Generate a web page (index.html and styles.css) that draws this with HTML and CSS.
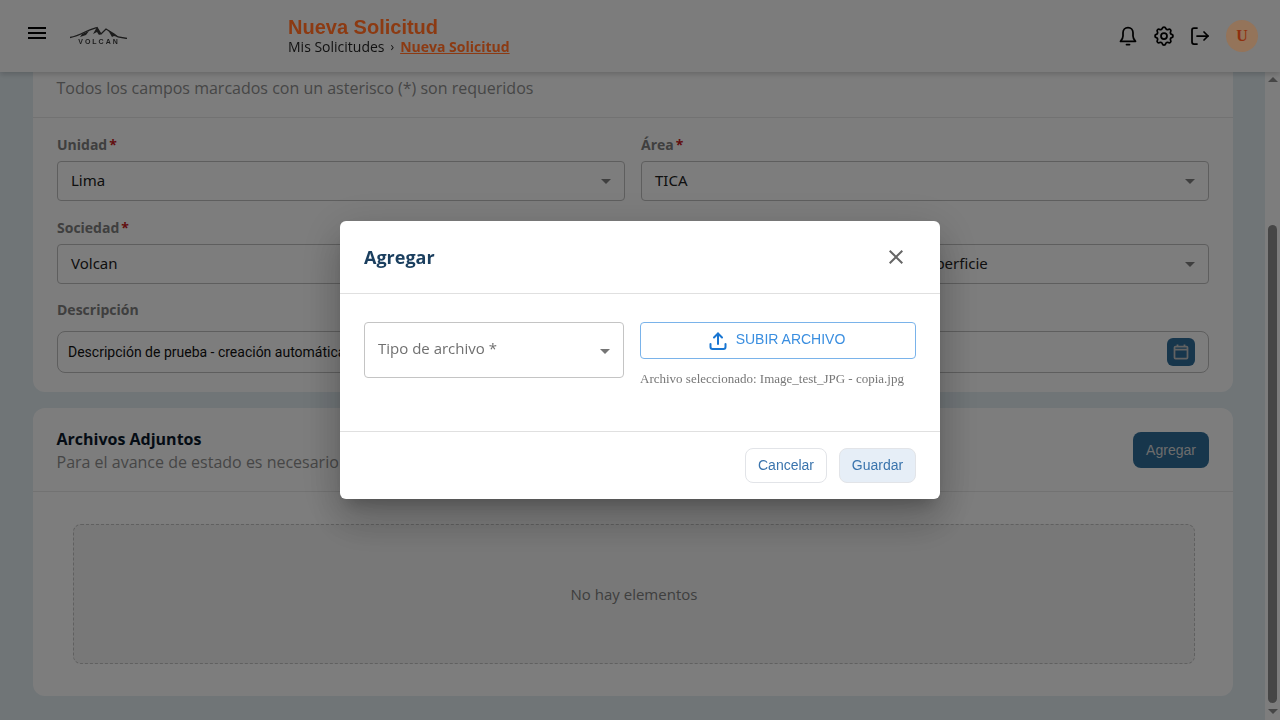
FILE: index.html
```html
<!DOCTYPE html>
<html>
<head>
<meta name="viewport" content="width=device-width, initial-scale=1">
<link rel="stylesheet" href="styles.css">
</head>
<body>

<header class="topbar">
  <svg class="menu-icon" width="24" height="24" viewBox="0 0 24 24"><path fill="currentColor" d="M3 18h18v-2H3zm0-5h18v-2H3zm0-7v2h18V6z"/></svg>
  <div class="logo">
    <svg width="58" height="13" viewBox="0 0 58 13" fill="none" stroke="#1c1c1c"><path stroke-width="1.300" d="M0 11.500C6 10.500 10 8.500 15 6S22 3 27 1.500L31 8l5-5 8 5 4 3 9 1.500"/><path fill="#1c1c1c" stroke="none" d="M27 1l-4 7 4-2 2 3 2-1zM38 4l4 7 2-1 4 1-4-3zM12 8l7-3-3 4-6 2z"/></svg>
    <span class="logo-text">VOLCAN</span>
  </div>
  <div class="page-title">
    <div class="page-title-main">Nueva Solicitud</div>
    <div class="crumbs"><span>Mis Solicitudes</span><span class="crumb-sep">›</span><a class="crumb-current">Nueva Solicitud</a></div>
  </div>
  <div class="topbar-actions">
    <svg class="action-icon" width="24" height="24" viewBox="0 0 24 24" fill="none" stroke="currentColor" stroke-width="1.750" stroke-linecap="round" stroke-linejoin="round"><path d="M12 3.500c-3 0-5 2.300-5 5.300v3.200c0 2.200-1 3.700-2.500 5.300h15c-1.500-1.600-2.500-3.100-2.500-5.300V8.800c0-3-2-5.300-5-5.300z"/><path d="M10.500 20.500h3"/></svg>
    <svg class="action-icon" width="24" height="24" viewBox="0 0 24 24" fill="none" stroke="currentColor" stroke-width="1.750" stroke-linecap="round" stroke-linejoin="round"><path d="M10.325 4.317c.426-1.756 2.924-1.756 3.350 0a1.724 1.724 0 0 0 2.573 1.066c1.543-.940 3.310.826 2.370 2.370a1.724 1.724 0 0 0 1.065 2.572c1.756.426 1.756 2.924 0 3.350a1.724 1.724 0 0 0-1.066 2.573c.940 1.543-.826 3.310-2.370 2.370a1.724 1.724 0 0 0-2.572 1.065c-.426 1.756-2.924 1.756-3.350 0a1.724 1.724 0 0 0-2.573-1.066c-1.543.940-3.310-.826-2.370-2.370a1.724 1.724 0 0 0-1.065-2.572c-1.756-.426-1.756-2.924 0-3.350a1.724 1.724 0 0 0 1.066-2.573c-.940-1.543.826-3.310 2.370-2.370 1 .608 2.296.070 2.572-1.065"/><circle cx="12" cy="12" r="3"/></svg>
    <svg class="action-icon" width="24" height="24" viewBox="0 0 24 24" fill="none" stroke="currentColor" stroke-width="1.750" stroke-linecap="round" stroke-linejoin="round"><path d="M9 4H6a2 2 0 0 0-2 2v12a2 2 0 0 0 2 2h3"/><path d="M9 12h11"/><path d="M16 8l4 4-4 4"/></svg>
    <div class="avatar">U</div>
  </div>
</header>

<div class="app">
  <main class="page">
    <section class="card card-form">
      <p class="card-note">Todos los campos marcados con un asterisco (*) son requeridos</p>
      <div class="form-grid">
        <div class="field">
          <label class="field-label">Unidad<span class="req">*</span></label>
          <div class="select-box"><span>Lima</span><i class="caret"></i></div>
        </div>
        <div class="field">
          <label class="field-label">Área<span class="req">*</span></label>
          <div class="select-box"><span>TICA</span><i class="caret"></i></div>
        </div>
        <div class="field">
          <label class="field-label">Sociedad<span class="req">*</span></label>
          <div class="select-box"><span>Volcan</span><i class="caret"></i></div>
        </div>
        <div class="field">
          <label class="field-label">Gerencia<span class="req">*</span></label>
          <div class="select-box"><span>Gerencia de Operaciones de Mina de Superficie</span><i class="caret"></i></div>
        </div>
        <div class="field field-text">
          <label class="field-label">Descripción</label>
          <div class="text-box">Descripción de prueba - creación automática</div>
        </div>
        <div class="field field-text">
          <label class="field-label">Fecha</label>
          <div class="text-box date-box">
            <span class="date-btn">
              <svg width="16" height="16" viewBox="0 0 16 16" fill="none" stroke="currentColor" stroke-width="1.750"><rect x="1.500" y="2.500" width="13" height="12" rx="1"/><path d="M1.500 5.500h13M4.500 .5v2M11.500 .5v2"/></svg>
            </span>
          </div>
        </div>
      </div>
    </section>

    <section class="card card-files">
      <div class="files-head">
        <div>
          <h3 class="files-title">Archivos Adjuntos</h3>
          <p class="files-sub">Para el avance de estado es necesario adjuntar al menos un archivo</p>
        </div>
        <button class="btn-primary">Agregar</button>
      </div>
      <div class="files-body">
        <div class="empty-box">No hay elementos</div>
      </div>
    </section>
  </main>

  <div class="scrollbar">
    <i class="arrow-up"></i>
    <div class="thumb"></div>
    <i class="arrow-down"></i>
  </div>
</div>

<div class="overlay">
  <div class="modal">
    <div class="modal-head">
      <h2 class="modal-title">Agregar</h2>
      <svg class="modal-close" width="24" height="24" viewBox="0 0 24 24"><path fill="currentColor" d="M19 6.410 17.590 5 12 10.590 6.410 5 5 6.410 10.590 12 5 17.590 6.410 19 12 13.410 17.590 19 19 17.590 13.410 12z"/></svg>
    </div>
    <div class="modal-body">
      <div class="type-select"><span>Tipo de archivo *</span><i class="caret caret-light"></i></div>
      <div class="upload-col">
        <button class="btn-upload">
          <svg width="20" height="20" viewBox="0 0 20 20" fill="none" stroke="#1976d2" stroke-width="2" stroke-linecap="round" stroke-linejoin="round"><path d="M2.500 13v3a2 2 0 0 0 2 2h11a2 2 0 0 0 2-2v-3"/><path d="M10 13V2.500"/><path d="M6 6.500l4-4 4 4"/></svg>
          SUBIR ARCHIVO
        </button>
        <p class="upload-name">Archivo seleccionado: Image_test_JPG - copia.jpg</p>
      </div>
    </div>
    <div class="modal-foot">
      <button class="btn-cancel">Cancelar</button>
      <button class="btn-save">Guardar</button>
    </div>
  </div>
</div>

</body>
</html>
```

FILE: styles.css
```css
* {
  box-sizing: border-box;
}

html, body {
  margin: 0;
  height: 720px;
  overflow: hidden;
}

body {
  font-family: "Open Sans", sans-serif;
  background: #e4eef3;
  color: #111;
}

/* header sits over the backdrop, its colours are the dimmed ones */
.topbar {
  position: fixed;
  top: 0;
  left: 0;
  right: 0;
  z-index: 20;
  height: 72px;
  display: flex;
  align-items: center;
  background: #7c7c7c;
  box-shadow: 0 2px 6px rgba(0, 0, 0, 0.2);
}

.menu-icon {
  margin-left: 25px;
  margin-top: -6px;
  color: #000;
}

.logo {
  width: 58px;
  margin-left: 21px;
  margin-top: -2px;
  display: flex;
  flex-direction: column;
  align-items: center;
}

.logo svg {
  display: block;
}

.logo-text {
  font-family: "Liberation Sans", sans-serif;
  font-size: 7px;
  font-weight: 700;
  line-height: 6px;
  letter-spacing: 2px;
  color: #1c1c1c;
}

.page-title {
  margin-left: 160px;
}

.page-title-main {
  font-family: "Liberation Sans", sans-serif;
  font-size: 20px;
  font-weight: 700;
  line-height: 20px;
  color: #8c3a12;
}

.crumbs {
  display: flex;
  align-items: center;
  font-size: 14px;
  line-height: 19px;
  color: #111;
}

.crumb-sep {
  margin: 0 6px;
  font-size: 12px;
}

.crumb-current {
  color: #8c3a12;
  font-weight: 700;
  text-decoration: underline;
}

.topbar-actions {
  margin-left: auto;
  margin-right: 22px;
  display: flex;
  align-items: center;
  gap: 12px;
}

.action-icon {
  color: #000;
}

.avatar {
  width: 32px;
  height: 32px;
  margin-left: 2px;
  border-radius: 50%;
  background: #94745a;
  color: #8f300e;
  font-family: "Liberation Serif", serif;
  font-size: 16px;
  font-weight: 700;
  display: flex;
  align-items: center;
  justify-content: center;
}

.app {
  display: flex;
  height: 720px;
}

.page {
  flex: 1;
  padding: 72px 32px 0 33px;
  display: flex;
  flex-direction: column;
  gap: 16px;
}

.card {
  background: #fff;
  border-radius: 12px;
}

.card-form {
  height: 320px;
  border-top-left-radius: 0;
  border-top-right-radius: 0;
}

.card-note {
  margin: 0;
  height: 46px;
  padding: 5px 24px 0 23.5px;
  font-size: 16px;
  line-height: 22px;
  color: #909090;
  border-bottom: 1px solid #e8e8e8;
}

.form-grid {
  display: grid;
  grid-template-columns: 1fr 1fr;
  column-gap: 16px;
  row-gap: 15px;
  padding: 15px 24px 0;
}

.field-label {
  display: block;
  height: 28px;
  font-size: 14px;
  font-weight: 700;
  line-height: 23px;
  color: #808080;
}

.field-text .field-label {
  margin-top: -1px;
}

.req {
  margin-left: 2px;
  color: #c8201e;
}

.select-box {
  height: 40px;
  padding: 0 13px 2px;
  display: flex;
  align-items: center;
  justify-content: space-between;
  border: 1px solid #c0c0c0;
  border-radius: 4px;
  font-family: "Noto Sans", sans-serif;
  font-size: 15px;
  color: #222;
}

.select-box span {
  white-space: nowrap;
}

.caret {
  width: 0;
  height: 0;
  margin-top: 2px;
  border-left: 5px solid transparent;
  border-right: 5px solid transparent;
  border-top: 5px solid #808080;
}

.caret-light {
  border-top-color: #757575;
}

.text-box {
  height: 42px;
  margin-top: 5px;
  padding: 0 10px;
  display: flex;
  align-items: center;
  border: 1px solid #c0c0c0;
  border-radius: 8px;
  font-family: Roboto, sans-serif;
  font-size: 14px;
  white-space: nowrap;
  color: #111;
}

.date-box {
  justify-content: flex-end;
  padding: 0 13px;
}

.date-btn {
  width: 28px;
  height: 28px;
  border-radius: 6px;
  background: #2f6f9c;
  color: #c8c8c8;
  display: flex;
  align-items: center;
  justify-content: center;
}

.card-files {
  height: 288px;
}

.files-head {
  height: 84px;
  padding: 20px 24px 0 23.5px;
  display: flex;
  justify-content: space-between;
  align-items: flex-start;
  border-bottom: 1px solid #e8e8e8;
}

.files-title {
  margin: 0;
  font-size: 16px;
  font-weight: 700;
  line-height: 22px;
  color: #0b1a2b;
}

.files-sub {
  margin: 1px 0 0;
  font-size: 16px;
  line-height: 22px;
  color: #909090;
}

.btn-primary {
  width: 76px;
  height: 36px;
  margin-top: 4px;
  border: none;
  border-radius: 8px;
  background: #2f6f9c;
  color: #ddd;
  font-family: "Liberation Sans", sans-serif;
  font-size: 14px;
}

.files-body {
  padding: 32px 38px 0 40px;
}

.empty-box {
  height: 140px;
  display: flex;
  align-items: center;
  justify-content: center;
  border: 1px dashed #c4c4c4;
  border-radius: 8px;
  background: #f5f5f5;
  font-size: 15px;
  color: #808080;
}

.scrollbar {
  width: 15px;
  padding: 77px 3px 0;
  display: flex;
  flex-direction: column;
  align-items: center;
  background: #fff;
}

.arrow-up {
  width: 0;
  height: 0;
  border-left: 5px solid transparent;
  border-right: 5px solid transparent;
  border-bottom: 5px solid #909090;
}

.thumb {
  width: 9px;
  height: 478px;
  margin-top: 143px;
  border-radius: 5px;
  background: #909090;
}

.arrow-down {
  width: 0;
  height: 0;
  margin-top: 6px;
  border-left: 5px solid transparent;
  border-right: 5px solid transparent;
  border-top: 5px solid #909090;
}

.overlay {
  position: fixed;
  top: 0;
  left: 0;
  right: 0;
  bottom: 0;
  z-index: 10;
  display: flex;
  align-items: center;
  justify-content: center;
  background: rgba(0, 0, 0, 0.51);
}

.modal {
  position: relative;
  z-index: 30;
  width: 600px;
  height: 278px;
  background: #fff;
  border-radius: 6px;
  box-shadow: 0 11px 15px -7px rgba(0, 0, 0, 0.2), 0 24px 38px 3px rgba(0, 0, 0, 0.14), 0 9px 46px 8px rgba(0, 0, 0, 0.12);
}

.modal-head {
  height: 73px;
  padding: 0 32px 0 24px;
  display: flex;
  align-items: center;
  justify-content: space-between;
  border-bottom: 1px solid #e0e0e0;
}

.modal-title {
  margin: 0;
  font-size: 18px;
  font-weight: 700;
  color: #1b3f5f;
}

.modal-close {
  color: #666;
}

.modal-body {
  height: 138px;
  padding: 28px 24px 0;
  display: flex;
  gap: 16px;
  border-bottom: 1px solid #e0e0e0;
}

.type-select {
  width: 260px;
  height: 56px;
  padding: 0 13px;
  display: flex;
  align-items: center;
  justify-content: space-between;
  border: 1px solid #c4c4c4;
  border-radius: 4px;
  font-size: 15px;
  color: #707070;
}

.type-select span {
  margin-top: -5px;
}

.upload-col {
  flex: 1;
}

.btn-upload {
  width: 100%;
  height: 37px;
  padding: 0 3px 4px 0;
  display: flex;
  align-items: center;
  justify-content: center;
  gap: 8px;
  border: 1px solid #7ab3ea;
  border-radius: 4px;
  background: #fff;
  color: #3a8ee0;
  font-family: "Liberation Sans", sans-serif;
  font-size: 14px;
}

.btn-upload svg {
  margin-top: 5px;
}

.upload-name {
  margin: 13px 0 0;
  font-family: "Liberation Serif", serif;
  font-size: 13px;
  line-height: 14px;
  color: #777;
}

.modal-foot {
  height: 67px;
  padding: 16px 24px 0;
  display: flex;
  justify-content: flex-end;
  gap: 12px;
}

.btn-cancel,
.btn-save {
  height: 35px;
  padding-bottom: 3px;
  border: 1px solid #e2e4e8;
  border-radius: 8px;
  font-family: "Liberation Sans", sans-serif;
  font-size: 14px;
  color: #3a74ad;
}

.btn-cancel {
  width: 82px;
  background: #fff;
}

.btn-save {
  width: 77px;
  background: #e6eef7;
}
```
